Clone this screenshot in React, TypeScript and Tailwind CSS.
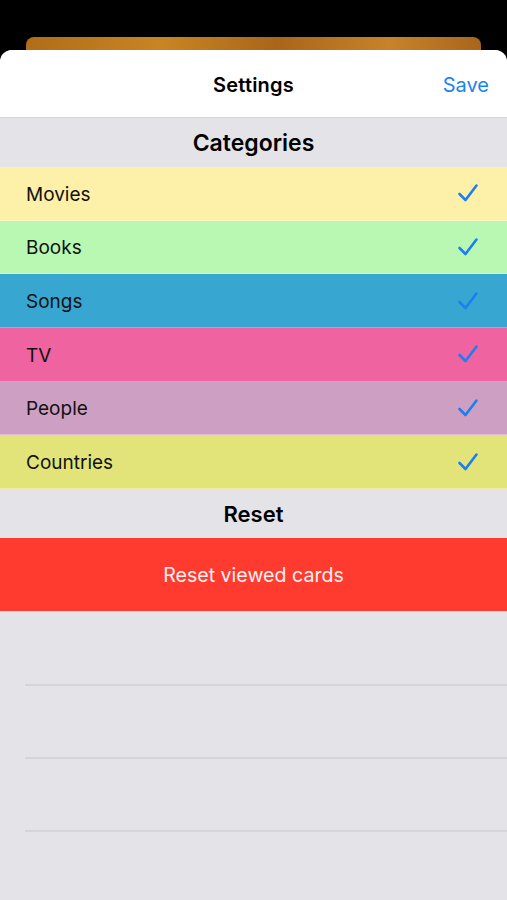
import React from 'react';

const categories = [
  { name: 'Movies', color: 'bg-[#fdf0a9]' },
  { name: 'Books', color: 'bg-[#b8f8b3]' },
  { name: 'Songs', color: 'bg-[#37a7d2]' },
  { name: 'TV', color: 'bg-[#ee63a0]' },
  { name: 'People', color: 'bg-[#cc9fc3]' },
  { name: 'Countries', color: 'bg-[#e2e479]' },
];

function Check() {
  return (
    <svg width="22" height="20" viewBox="0 0 22 20" fill="none">
      <path
        d="M2.5 11 L8.5 17 L19.5 2.5"
        stroke="#1b7ff0"
        strokeWidth="2.6"
        strokeLinecap="round"
        strokeLinejoin="round"
      />
    </svg>
  );
}

export default function App() {
  return (
    <div className="w-[507px] h-[900px] bg-black overflow-hidden font-['Inter',sans-serif]">
      {/* card peeking behind the sheet */}
      <div className="pt-[37px] px-[26px]">
        <div className="h-[13px] rounded-t-[8px] bg-[linear-gradient(90deg,#b06d18,#c98424_30%,#a9661a_55%,#c7822a_80%,#a8661c)]"></div>
      </div>

      <div className="h-[850px] bg-[#e4e4e8] rounded-t-[12px] overflow-hidden">
        {/* nav bar */}
        <div className="h-[68px] bg-white border-b border-[#d6d6da] flex items-center justify-center relative pt-[2px]">
          <span className="text-[20px] font-semibold text-black tracking-[0.2px]">Settings</span>
          <span className="absolute right-[18px] text-[20px] text-[#1b84f0]">Save</span>
        </div>

        <div className="h-[49px] flex items-center justify-center pt-[2px]">
          <span className="text-[23px] font-semibold text-black">Categories</span>
        </div>

        {categories.map((c) => (
          <div
            key={c.name}
            className={`h-[53.7px] ${c.color} border-b border-white/30 flex items-center justify-between pl-[26px] pr-[28px]`}
          >
            <span className="text-[19px] text-[#111] pt-[3px]">{c.name}</span>
            <Check />
          </div>
        ))}

        <div className="h-[49px] flex items-center justify-center pt-[2px]">
          <span className="text-[22px] font-semibold text-black">Reset</span>
        </div>

        <div className="h-[73px] bg-[#ff3b30] flex items-center justify-center pt-[2px]">
          <span className="text-[19.6px] text-[#fff2ee]">Reset viewed cards</span>
        </div>

        <div className="h-[73px]"></div>
        <div className="pl-[25px]">
          <div className="h-[73px] border-t-2 border-[#d6d6da]"></div>
          <div className="h-[73px] border-t-2 border-[#d6d6da]"></div>
          <div className="h-[73px] border-t-2 border-[#d6d6da]"></div>
        </div>
      </div>
    </div>
  );
}
